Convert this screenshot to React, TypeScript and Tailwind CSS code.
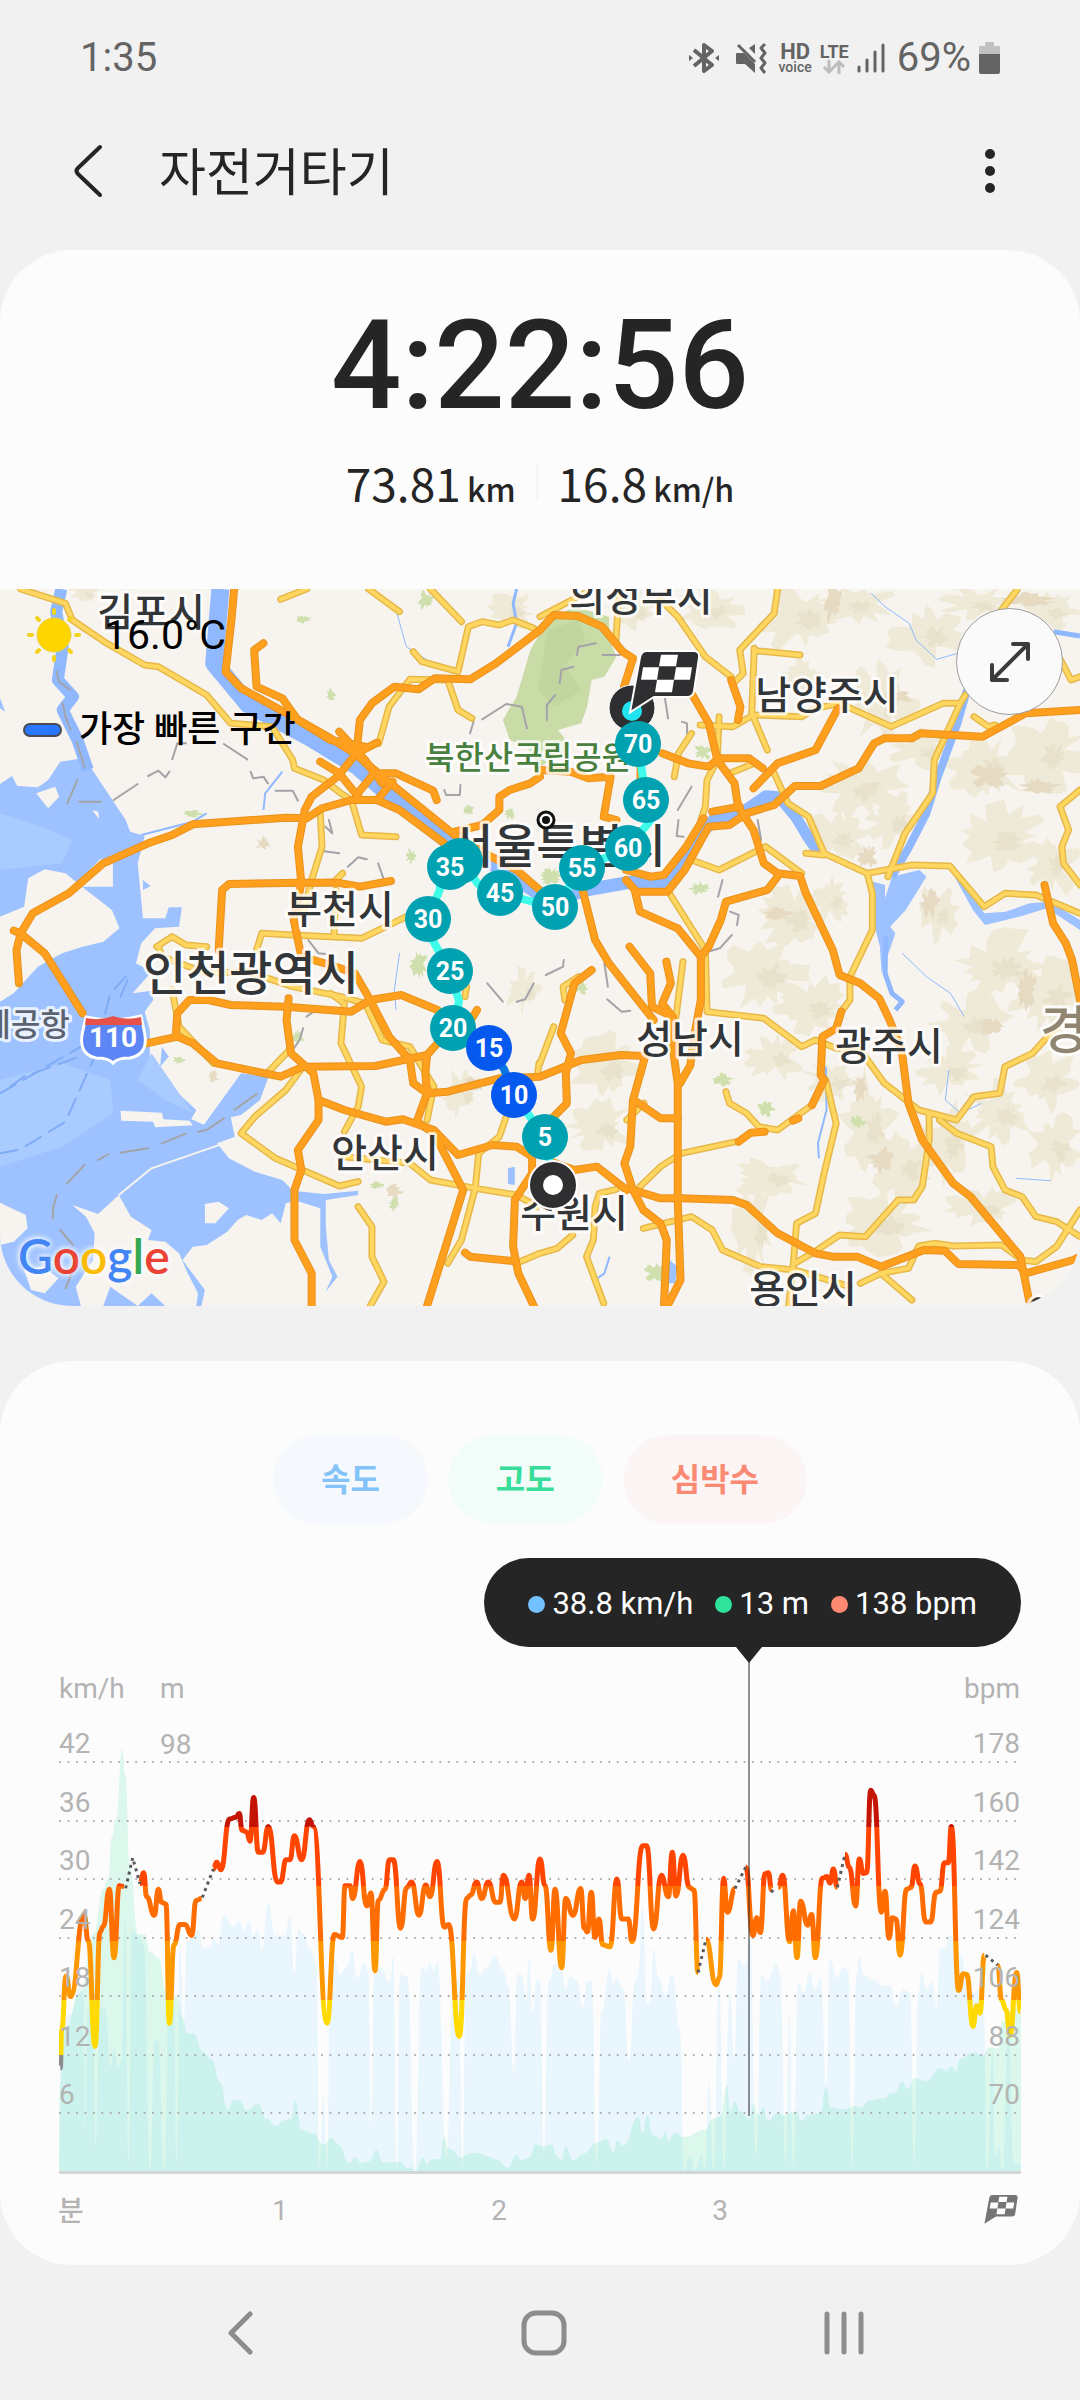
import React from "react";

// ---------- helpers ----------

type Point = [number, number];

type Chunk = {
  offset: number;
  points: string;
};

const parse = (points: string, offset = 0): Point[] =>
  points.split(" ").map((pair) => {
    const [x, y] = pair.split(",").map(Number);
    return [x + offset, y];
  });

const joinChunks = (chunks: Chunk[]): Point[] =>
  chunks.flatMap((chunk) => parse(chunk.points, chunk.offset));

// Curva suave con tangente horizontal en cada punto
const smooth = (points: Point[]) =>
  points.reduce((d, [x, y], i) => {
    if (i === 0) return `M${x} ${y}`;
    const [px, py] = points[i - 1];
    const mx = (px + x) / 2;
    return `${d}C${mx} ${py} ${mx} ${y} ${x} ${y}`;
  }, "");

const area = (chunks: Chunk[]) => `${smooth(joinChunks(chunks))}V1383H177Z`;

// Mancha irregular de terreno
const blob = (cx: number, cy: number, rx: number, ry: number, seed: number) => {
  const points: string[] = [];
  for (let i = 0; i < 30; i++) {
    const angle = (i / 30) * Math.PI * 2;
    const noise = Math.abs(Math.sin(seed * 127.1 + i * 311.7) * 43758.5) % 1;
    const k = 0.45 + 0.75 * noise;
    points.push(
      `${Math.round(cx + Math.cos(angle) * rx * k)},${Math.round(cy + Math.sin(angle) * ry * k)}`
    );
  }
  return points.join(" ");
};

// ---------- map data ----------

const waterAreas = [
  "0,612 35,588 50,618 110,622 140,600 175,545 240,535 262,560 365,720 378,755 420,768 400,850 415,1015 480,1015 490,982 528,982 520,1040 450,1045 410,1090 395,1150 440,1175 385,1240 440,1232 445,1260 420,1295 435,1350 435,1460 570,1590 555,1618 592,1634 700,1480 780,1490 755,1560 700,1605 670,1612 682,1670 630,1690 665,1735 740,1775 820,1800 850,1832 940,1842 1040,1832 1040,1845 946,1860 946,1940 955,2040 980,2090 945,2136 965,2090 930,2000 930,1885 860,1862 830,1870 815,1930 790,1900 760,1920 715,1905 690,1920 660,1955 600,1995 560,2000 530,2040 595,2130 585,2178 0,2178",
  "2518,900 2570,915 2570,955 2590,890 2670,870 2690,890 2630,990 2585,1040 2600,1060 2560,1180 2555,1100 2540,1040",
  "2758,865 2798,900 2858,1000 2920,995 2990,970 3050,965 3136,1020 3136,1050 3040,985 2960,1010 2860,1035 2825,990",
  "1938,2035 1968,2060 1960,2110 1938,2110",
  "470,1400 490,1430 465,1460",
  "1475,1765 1495,1760 1495,1815 1475,1812",
  "0,355 15,395 0,385",
  "415,900 438,918 415,930",
];

const deepWater = [
  "0,700 120,740 210,780 180,850 0,870",
  "0,1500 180,1450 320,1500 330,1600 180,1700 0,1760",
  "440,1420 560,1600 480,1560 400,1500",
];

const islands = [
  "0,1010 70,980 82,895 130,868 190,880 250,930 325,990 347,1045 300,1085 240,1100 180,1120 110,1160 40,1240 0,1265",
  "232,920 260,870 290,838 328,838 328,920",
  "105,640 160,620 172,650 140,685",
  "268,690 285,695 288,718",
  "350,1592 470,1598 475,1618 550,1622 560,1636 450,1642 445,1625 352,1622",
  "210,1875 285,1902 345,1845 380,1910 440,1950 430,1980 480,1985 520,2020 545,2080 575,2140 570,2178 480,2178 440,2140 400,2178 320,2120 300,2178 235,2178 220,2120 270,2040 275,1960 250,1910",
  "0,1868 75,1905 80,1945 40,1985 0,1995",
  "595,1872 635,1865 665,1885 625,1930 595,1930",
  "70,2070 125,2060 170,2095 130,2140 90,2130",
];

const rivers: { d: string; width: number }[] = [
  { d: "178,27 163,95 182,200 168,300 212,350 182,390 225,480 255,570", width: 12 },
  { d: "640,27 622,250 720,372 900,472 1040,560 1150,660 1300,780", width: 18 },
  { d: "1300,780 1440,860 1600,965 1700,930 1840,905 1930,905 1985,840 2025,765 2075,720 2155,700 2225,650 2275,655", width: 13 },
  { d: "2260,648 2310,710 2345,770 2375,815", width: 11 },
  { d: "2808,330 2780,430 2720,600 2690,700 2640,800 2590,890", width: 8 },
  { d: "2572,1070 2570,1180 2590,1240 2620,1265 2600,1290", width: 5 },
  { d: "2530,40 2570,80 2640,130 2660,180 2720,238 2780,220", width: 1 },
  { d: "3060,155 3136,168", width: 5 },
  { d: "1500,27 1490,70 1500,130 1475,200", width: 3 },
  { d: "1150,90 1180,200 1240,240", width: 1 },
  { d: "820,575 770,640 765,690", width: 2 },
  { d: "410,765 560,725 600,700", width: 2 },
  { d: "2398,1460 2400,1590 2375,1690 2378,1735", width: 2 },
  { d: "2620,1120 2690,1190 2760,1240 2800,1310", width: 1 },
  { d: "2755,1470 2745,1560 2790,1600 2850,1570", width: 1 },
  { d: "2950,1795 3050,1802", width: 1 },
  { d: "1770,2030 1755,2080 1730,2098", width: 2 },
  { d: "650,1690 440,1765 345,1845", width: 0 },
  { d: "1160,1120 1145,1230 1150,1290", width: 1 },
];

const terrain: [number, number, number, number, number][] = [
  [1840, 90, 60, 60, 1], [2060, 90, 100, 70, 2], [2330, 110, 120, 100, 3], [2480, 70, 120, 55, 4],
  [2700, 160, 120, 90, 5], [2840, 70, 110, 50, 6], [3050, 90, 90, 55, 7], [2560, 360, 110, 110, 8],
  [2330, 290, 60, 50, 9], [2500, 620, 120, 100, 10], [2680, 510, 90, 60, 11], [2430, 770, 90, 80, 12],
  [2590, 720, 80, 80, 13], [2860, 560, 110, 110, 14], [3040, 520, 110, 120, 15], [2900, 770, 130, 100, 16],
  [3050, 850, 80, 100, 17], [2300, 1010, 110, 100, 18], [2220, 1180, 130, 110, 19], [2410, 960, 60, 70, 20],
  [2360, 1280, 110, 90, 21], [2420, 1500, 90, 60, 22], [2250, 1430, 90, 70, 23], [2900, 1160, 150, 110, 24],
  [3050, 1240, 120, 120, 25], [2820, 1330, 120, 90, 26], [2760, 1470, 90, 70, 27], [2520, 1640, 80, 160, 28],
  [2630, 1760, 90, 100, 29], [2750, 1690, 80, 120, 30], [2240, 1790, 110, 60, 31], [2560, 1930, 130, 90, 32],
  [2900, 1600, 110, 90, 33], [3040, 1500, 100, 90, 34], [3060, 1700, 80, 110, 35], [1760, 1460, 100, 110, 36],
  [1740, 1640, 90, 80, 37], [2190, 1950, 60, 130, 38], [2850, 1880, 100, 60, 39], [1480, 90, 70, 60, 40],
  [1520, 1230, 50, 70, 41], [1340, 1540, 50, 70, 42], [2720, 1000, 60, 80, 43], [240, 35, 40, 30, 44],
];

const hills: [number, number, number, number, number][] = [
  [2420, 60, 25, 70, 3], [2600, 350, 50, 25, 5], [2990, 60, 80, 22, 9], [2870, 590, 50, 40, 12],
  [2260, 1000, 40, 25, 14], [2980, 1230, 30, 60, 16], [2880, 1340, 40, 25, 18], [2500, 1520, 25, 40, 22],
  [2520, 830, 30, 35, 23], [2700, 970, 30, 40, 26], [3020, 620, 60, 25, 28], [2560, 1740, 40, 40, 30],
  [1380, 1510, 35, 22, 31], [765, 790, 25, 18, 33], [1145, 1835, 22, 25, 36], [620, 1490, 15, 18, 37],
];

const parks: [number, number, number, number, number][] = [
  [880, 118, 22, 12, 1], [960, 345, 14, 20, 2], [1238, 60, 22, 28, 3], [1215, 1150, 26, 40, 4],
  [865, 1370, 18, 22, 5], [1195, 830, 16, 22, 6], [2225, 1585, 26, 24, 7], [2490, 1625, 26, 18, 8],
  [2100, 1500, 30, 20, 9], [2030, 925, 28, 20, 10], [1690, 1225, 22, 18, 11], [1905, 2080, 34, 30, 12],
  [1145, 1870, 16, 22, 13], [1095, 1815, 20, 14, 14], [560, 700, 26, 12, 15], [1360, 690, 18, 14, 16],
  [2040, 515, 26, 26, 17], [1600, 890, 36, 26, 18], [520, 1440, 18, 12, 19], [1480, 700, 16, 20, 20],
];

const highways = [
  "680,27 672,120 655,275 700,325 850,410 960,475 1030,520 1110,590 1320,765 1430,832 1500,870 1590,950",
  "765,190 738,210 745,320 820,355 865,420 960,480 1060,500",
  "1568,150 1440,250 1365,298 1262,295 1215,328 1145,320 1080,370 1045,420 1035,520 980,590 905,650 885,690 865,800 875,910 853,1020 875,1130 960,1155 1030,1180 1075,1260 1130,1370 1190,1440 1200,1510 1240,1540 1300,1535 1450,1495 1568,1490 1688,1440 1803,1425 1870,1428",
  "60,1060 95,1000 200,940 300,850 430,790 500,765 560,733 830,713 890,715 935,685 1020,660 1095,660 1160,690 1290,790",
  "985,455 1060,540 1110,610",
  "930,545 985,580 1040,650",
  "1095,488 1035,520 1090,580 1150,580 1258,632 1268,660",
  "1140,605 1095,660",
  "1090,575 1035,645",
  "635,1110 645,930 665,912 870,908 980,908 1045,920 1135,903",
  "1568,150 1608,105 1678,108 1748,140 1808,215 1838,235 1812,320",
  "1980,290 2058,430 2083,540 2133,610 2143,680 2188,750 2218,850 2258,880 2323,888 2340,940 2418,1110 2438,1185 2498,1210 2553,1255 2583,1320 2618,1410 2638,1570 2678,1680 2768,1810 2818,1850 2963,2030 2988,2160",
  "1923,520 1998,550 2058,560 2088,535 2175,535 2215,565",
  "2433,385 2368,510 2258,550 2188,625",
  "3136,390 2978,400 2853,470 2673,460 2648,475 2568,475 2538,490 2493,565 2383,618 2308,618 2248,675 2168,700 2118,735 2058,740 1988,870 1938,935 1848,935 1818,900",
  "2043,715 1993,800 1928,885 1888,890 1818,870",
  "2123,300 2150,380 2143,420",
  "3033,915 3058,1030 3095,1090 3113,1140 3136,1260",
  "2068,695 2148,680",
  "2258,890 2228,930 2108,965 2093,1020 2058,1100 2035,1130 2035,1260 2010,1400 2005,1455 1975,1510",
  "1693,935 1728,1080 1768,1150 1898,1320",
  "1843,930 1858,995 1968,1045 2035,1130",
  "1568,590 1540,610 1480,630 1450,650 1450,690 1400,735 1320,755",
  "1568,570 1658,575 1708,595 1773,590 1753,710 1790,720",
  "1860,560 1860,630",
  "40,1052 60,1060 130,1120 240,1300",
  "60,1060 48,1110 55,1210",
  "425,1390 515,1370 560,1390 630,1450 815,1490 880,1460 1090,1458 1240,1425",
  "510,1370 515,1300 550,1260 605,1260 670,1275 830,1280 1020,1295 1075,1260 1165,1245 1270,1290",
  "838,1255 832,1320 845,1420 910,1480 925,1560 925,1620 865,1710 875,1770 855,1830 855,1980 905,2080 905,2178",
  "925,1560 1000,1590 1120,1625 1170,1618 1260,1650 1330,1725 1430,1695 1500,1700 1545,1730 1545,1780 1495,1860 1490,2000 1505,2080 1550,2178",
  "1385,1290 1350,1350 1270,1390 1240,1425 1235,1480 1240,1540 1210,1625 1260,1660 1310,1760 1345,1830 1300,1980 1240,2178",
  "1350,2018 1365,2030 1490,2043",
  "1873,1430 1838,1560 1830,1700 1813,1750 1838,1830 1918,1855 1978,1855 2128,1860 2168,1875 2258,1960 2368,2020 2418,2030 2488,2030 2558,2060 2683,2010 2743,2012 2783,2052 2958,2055 2978,2080 3116,2040 3136,2030",
  "1600,1745 1668,1770 1733,1760 1820,1830",
  "1838,1830 1868,1890 1918,1930 1936,1980 1928,2178",
  "1953,1400 1968,1510 1968,1860 1976,2100 1938,2178",
  "1848,1565 1918,1615 1968,1615",
  "1718,1170 1668,1210 1628,1360 1658,1420 1643,1480 1646,1570 1608,1610",
  "1828,1100 1888,1180 1893,1280 1953,1310",
  "1935,1145 1948,1210 1923,1270 1953,1310 1960,1420",
  "2443,1295 2428,1345 2388,1370 2383,1485 2393,1500 2358,1575",
  "2145,1685 2180,1658 2220,1655",
  "2303,1622 2318,1615",
];

const roads = [
  "60,27 190,70 210,120 310,190 420,255 460,260 600,345 670,430 790,440 850,540 855,565 940,600 990,640 1020,660 1050,765 1150,770",
  "815,58 890,27",
  "1070,27 1160,95",
  "1250,27 1340,125",
  "1200,215 1225,245 1330,275 1360,140 1400,125 1450,135 1490,120 1550,145",
  "1100,490 1130,380 1190,298 1300,300 1330,390 1370,415",
  "930,700 935,800 905,900 880,1000",
  "455,1100 500,1070 540,1095 600,1100",
  "745,1110 760,1060 850,1065 1050,1075 1180,1010",
  "920,908 970,905 995,880",
  "975,930 970,1070",
  "500,1230 520,1340 620,1450",
  "960,1240 1000,1270 990,1390 1050,1520 1040,1580 1000,1655",
  "780,1475 840,1410",
  "880,1460 830,1530 740,1610 700,1660 800,1735 985,1818 1040,1805",
  "1040,1880 1080,1940 1080,2030 1115,2105 1075,2178",
  "1000,1730 1190,1750 1250,1800 1380,1825 1500,1845 1560,1880",
  "1300,2050 1340,1980 1380,1825 1390,1720 1450,1670 1470,1610",
  "460,1100 470,1130 600,1180 720,1175 850,1220 990,1250 1060,1270 1110,1380 1190,1400 1260,1520 1240,1620",
  "1560,1490 1565,1450",
  "1350,1250 1355,1220 1320,1180",
  "1568,110 1698,40",
  "1798,27 1788,190",
  "1918,60 1968,110 2048,230 2123,290",
  "2258,27 2248,100 2148,210 2158,280 2130,310",
  "2193,212 2323,225",
  "2190,205 2183,400 2228,510",
  "2033,435 2128,440 2188,405 2328,410 2368,385 2438,370 2588,440 2738,370 2788,370 2803,345",
  "2788,370 2713,540 2708,640 2628,760 2578,890",
  "2953,30 2908,90",
  "3080,240 3110,300 3136,290",
  "2828,410 2870,440 2890,435",
  "2248,580 2288,670 2348,710 2393,820 2518,880 2648,855 2758,858 2858,980 2918,940 3008,945 3136,1000",
  "2518,880 2533,940 2533,1050 2468,1190 2468,1260 2443,1295",
  "2340,820 2393,825",
  "2008,840 2088,870 2223,800 2328,880",
  "2008,460 1970,520 1958,590",
  "2088,410 2083,540 2053,600 2048,680 2035,720",
  "2120,580 2190,550",
  "1938,930 2048,1110",
  "3136,630 3078,680 3103,750 3083,800 3088,850 3136,915",
  "2048,1100 2053,1295 2218,1315 2328,1400 2368,1380 2428,1405 2498,1410 2568,1510 2668,1590 2778,1620 2828,1550 2903,1540 2918,1460 2998,1420 3068,1340",
  "2698,1600 2698,1680 2678,1820 2653,1860 2608,1860 2513,1970 2438,1965 2358,2020 2308,2050",
  "2728,1620 2778,1660 2878,1700 2883,1760 2918,1830 2968,1850 3008,1910 3068,1925 3136,1970",
  "3136,1890 3068,2000 3008,2045 2968,2040 2908,1995 2768,1998 2713,1990 2668,1998 2638,2065 2558,2080 2498,2110",
  "2398,1500 2428,1630 2393,1780 2368,1900 2313,1930 2303,2060 2290,2178",
  "2108,1535 2118,1570 2168,1600 2203,1640 2258,1650 2358,1575",
  "1978,1720 2138,1685",
  "1978,1720 1918,1760 1858,1820",
  "1868,1945 2008,1910 2068,1950 2098,2010 2208,2060 2308,2070 2468,2120",
  "2558,2080 2648,2160",
  "1983,1145 1963,1310",
  "1663,1965 1618,2005 1568,2020 1510,2045",
  "1790,1828 1740,1840 1728,1880 1723,1980 1703,2030 1753,2170",
  "1608,1340 1568,1450",
  "1640,1260 1635,1220 1680,1190",
  "1820,1620 1870,1570",
];

const rails = [
  "165,275 170,305 205,330", "182,370 190,410 205,450", "222,485 245,560", "225,600 195,670", "230,665 293,665",
  "330,660 400,612", "500,538 515,490 540,490", "650,492 718,538", "430,588 460,572 480,592 492,575",
  "728,575 735,595 765,590 778,610", "800,632 850,632 865,662", "1400,418 1470,372 1515,380 1530,445",
  "1290,630 1295,645 1335,645 1337,615", "955,720 965,760 945,740", "930,812 985,820", "1010,860 1040,832 1065,838",
  "1098,850 1115,900", "1365,460 1375,425", "745,1542 680,1590", "650,1615 600,1650 575,1655", "540,1660 470,1690",
  "430,1705 350,1718", "315,1722 285,1740", "245,1755 195,1810", "165,1845 155,1880 153,1915", "175,1950 212,1995",
  "208,2080 190,2125", "880,1345 870,1380 850,1410", "890,1310 930,1280", "895,1080 925,1120 945,1122",
  "1415,1210 1460,1265", "1500,1265 1525,1258 1550,1210", "1675,225 1680,200 1730,190", "1625,310 1630,270 1665,260",
  "1588,420 1588,375 1612,345", "1750,225 1800,225", "1930,350 1940,415", "1968,690 2008,620", "1970,720 1965,768 1985,770",
  "2098,900 2085,950", "2120,995 2145,1005 2140,1035", "2125,1065 2090,1105 2040,1120", "1585,1185 1635,1160 1637,1140",
  "1755,1150 1765,1220", "1763,1258 1805,1295 1830,1292", "1980,425 1995,430 1995,460", "2200,720 2210,780",
];

const ferries = ["0,1540 235,1400", "30,1520 70,1490 230,1430", "0,1720 60,1708 190,1625 240,1510 275,1430 320,1240 365,1190", "350,1250 375,1190"];

const cityLabels = [
  { text: "김포시", x: 151, y: 37 },
  { text: "의정부시", x: 641, y: 22 },
  { text: "남양주시", x: 827, y: 120 },
  { text: "부천시", x: 340, y: 334 },
  { text: "안산시", x: 385, y: 578 },
  { text: "성남시", x: 690, y: 464 },
  { text: "광주시", x: 889, y: 471 },
  { text: "수원시", x: 574, y: 638 },
  { text: "용인시", x: 803, y: 714 },
];

const kmMarkers = [
  { km: 35, x: 450, y: 278 },
  { km: 30, x: 428, y: 330 },
  { km: 45, x: 500, y: 304 },
  { km: 50, x: 555, y: 318 },
  { km: 55, x: 582, y: 279 },
  { km: 60, x: 628, y: 259 },
  { km: 65, x: 646, y: 211 },
  { km: 70, x: 638, y: 155 },
  { km: 25, x: 450, y: 382 },
  { km: 20, x: 453, y: 439 },
  { km: 15, x: 489, y: 459, fast: true },
  { km: 10, x: 514, y: 506, fast: true },
  { km: 5, x: 545, y: 548 },
];

// ---------- chart data ----------

const speed: Chunk[] = [
  { offset: 120, points: "57,1383 62,1000 75,962 90,960 120,880 130,900 135,1270 142,950 150,930 160,1000 167,1310 180,940 195,940 212,1100 222,1050 235,1100 245,1080 255,700 266,1360 275,730 300,750 312,770 330,1383 345,1030 355,1030 372,1383 390,850 400,870 410,1360 420,760 432,1000 440,760 475,730 490,780 512,775 520,755 535,770 550,690 580,720 600,705 612,730 625,708 640,745 655,730 665,785 685,655 705,745 735,745 750,690 763,850 775,730 790,740 810,780 830,830 838,1375 850,1180 862,1370 870,830 885,810 900,850 920,830 937,785 950,860 975,820 985,840 993,1255 1003,850 1020,830" },
  { offset: 1140, points: "30,870 39,800 51,1380 60,850 82,855 105,1380 125,830 140,838 150,820 160,840 172,820 200,1350 218,900 235,860 248,1380 258,850 270,840 282,795 300,850 320,830 345,800 370,840 385,880 402,1115 412,850 425,850 438,920 447,810 458,955 470,865 480,870 492,1340 505,870 525,820 545,840 557,890 570,855 590,865 610,940 622,870 635,870 650,1360 665,950 690,835 700,880 710,860 730,890 747,1085 765,870 775,850 787,665 802,930 812,920 820,780 835,855 855,905 877,850 900,1000 912,1380 930,1340 945,1380 965,1340 975,1380 987,1140 1000,1380 1018,860 1031,1380" },
  { offset: 2100, points: "90,900 103,1080 115,810 135,830 150,750 168,1340 185,850 200,870 230,820 240,850 258,1360 268,960 280,1365 295,870 310,900 330,845 345,890 362,860 379,1150 390,810 412,860 430,830 445,840 457,1370 470,850 478,800 490,850 520,865 550,880 570,880 588,935 610,890 630,900 643,1365 655,900 665,845 680,890 695,870 710,940 720,780 735,780 750,745 765,760 785,800 800,870 820,900 840,890 850,900 862,1383 878,1060 885,1340 897,1320 908,1383 925,1000 942,1360 963,1363" },
];

const altitude: Chunk[] = [
  { offset: 120, points: "57,1383 60,1150 75,1000 120,900 160,740 190,620 205,590 215,480 228,430 247,240 256,310 270,560 295,740 315,742 330,790 355,805 380,900 410,910 430,970 440,1010 460,1010 490,1060 515,1080 540,1140 563,1215 580,1190 600,1190 620,1218 655,1200 680,1240 710,1260 730,1245 755,1240 765,1190 785,1270 820,1280 850,1310 875,1292 895,1310 928,1360 945,1345 965,1360 990,1355 1008,1325 1030,1360" },
  { offset: 1140, points: "30,1358 60,1358 85,1375 95,1370 105,1383 130,1345 140,1362 155,1350 180,1350 193,1290 205,1320 215,1325 240,1345 270,1335 295,1333 315,1340 350,1350 382,1372 410,1338 425,1352 450,1345 465,1310 490,1315 515,1310 530,1340 545,1352 557,1315 580,1352 610,1335 650,1305 680,1295 700,1330 712,1300 730,1313 775,1235 788,1280 802,1230 820,1285 845,1295 855,1275 865,1300 885,1278 910,1290 975,1270 1000,1240 1020,1235 1042,1150" },
  { offset: 2100, points: "90,1220 105,1195 120,1220 148,1240 160,1200 175,1230 190,1210 203,1245 235,1225 250,1230 290,1220 303,1245 325,1230 360,1225 379,1155 392,1210 430,1215 465,1205 480,1210 510,1190 555,1185 570,1172 585,1170 605,1140 625,1160 643,1130 680,1138 720,1103 740,1112 753,1098 768,1110 780,1078 820,1062 850,1068 865,1047 895,1050 905,980 940,950 963,930" },
];

const heartRate: Chunk[][] = [
  [{ offset: 120, points: "61,1103 65,1000 78,855 92,910 132,690 145,760 165,1045 180,735 190,720 208,620 222,805 238,610 252,612" }],
  [{ offset: 120, points: "300,605 311,575 320,640 343,690 355,620 365,655 378,660 388,982 402,770 420,715 435,715 455,745 468,650 485,645" }],
  [
    { offset: 120, points: "520,565 530,547 543,567 568,430 588,425 598,415 606,460 620,465 630,490 641,372 655,520 668,520 685,450 712,600 722,600 738,540 750,540 763,475 785,540 808,432 820,450 861,982 883,742 907,750 915,610 930,610 938,645 960,545 980,665 993,630 1005,840 1015,650 1035,620" },
    { offset: 1140, points: "28,540 40,540 62,725 80,615 95,600 117,690 137,608 150,640 171,545 193,722 206,715 238,1018 260,645 272,635 290,600 305,645 325,600 347,655 360,655 370,582 403,700 425,600 436,645 447,582 458,700 480,538 495,610 513,785 525,620 545,832 557,645 579,690 602,618 613,725 622,735 634,628 645,750 657,700 668,770 690,775 711,592 725,700 745,700 756,762 788,502 800,502 821,727 844,582 865,640 877,520 888,638 909,528 928,615 942,622 954,845" },
  ],
  [{ offset: 1140, points: "978,755 1008,878 1018,860 1031,590 1042,682 1065,618" }],
  [{ offset: 2100, points: "137,560 159,745 170,697 181,737 195,578 205,575 215,622" }],
  [{ offset: 2100, points: "235,615 248,582 269,762 280,678 291,805 302,652 323,717 335,688 346,805 367,590 380,585 390,603 400,565 412,615" }],
  [{ offset: 2100, points: "435,525 448,560 467,665 478,538 490,577 500,575 512,352 522,365 544,682 555,625 567,752 577,697 588,700 600,798 620,620 633,615 645,557 660,605 677,708 692,708 708,628 720,625 733,548 745,548 754,450 776,893 790,848 800,850 819,990 830,935 840,955 853,798" }],
  [{ offset: 2100, points: "893,825 905,920 918,945 930,1015 950,845 961,950" }],
];

const heartGaps: Chunk[] = [
  { offset: 120, points: "257,617 278,535 300,605" },
  { offset: 120, points: "487,642 520,565" },
  { offset: 1140, points: "954,845 978,755" },
  { offset: 2100, points: "105,618 137,560" },
  { offset: 2100, points: "213,622 224,630" },
  { offset: 2100, points: "412,615 435,525" },
  { offset: 2100, points: "857,798 893,825" },
];

const zones = [
  { from: 0, to: 451, color: "#c41404" },
  { from: 451, to: 610, color: "#ff4500" },
  { from: 610, to: 760, color: "#ff6d00" },
  { from: 760, to: 918, color: "#ff9800" },
  { from: 918, to: 1068, color: "#ffd900" },
  { from: 1068, to: 1400, color: "#8c8c8c" },
];

const gridRows = [
  { line: 102, speed: "42", bpm: "178" },
  { line: 161, speed: "36", bpm: "160" },
  { line: 219, speed: "30", bpm: "142" },
  { line: 278, speed: "24", bpm: "124" },
  { line: 336, speed: "18", bpm: "106" },
  { line: 395, speed: "12", bpm: "88" },
  { line: 453, speed: "6", bpm: "70" },
];

const readings = [
  { dot: "bg-[#74c1ff]", text: "38.8 km/h" },
  { dot: "bg-[#2fe39b]", text: "13 m" },
  { dot: "bg-[#ff8870]", text: "138 bpm" },
];

// ---------- components ----------

const StatusBar = () => (
  <div className="flex h-28 items-center justify-between px-20 pt-1 text-[40px] text-[#646464]">
    <span>1:35</span>
    <div className="flex items-center gap-2">
      <svg className="mr-2 h-8 w-[30px]" viewBox="0 0 30 32" fill="none" stroke="currentColor" strokeWidth="4">
        <path d="M5 8 23 23 15 29V3L23 9 5 24" strokeLinejoin="round" />
        <path d="M0 13v6l4-3zM30 13v6l-4-3z" fill="currentColor" stroke="none" />
      </svg>
      <svg className="mr-1 h-8 w-[32px]" viewBox="0 0 32 32" fill="currentColor">
        <path d="M1 12q0-1 1-1h7L20 22v9L10 22H2q-1 0-1-1zM20 2v10l-6-6z" />
        <path d="M3 3l17 17" stroke="currentColor" strokeWidth="3" />
        <path d="M30 2l-4 4 4 5-4 5 4 5-4 5 4 5" fill="none" stroke="currentColor" strokeWidth="3" strokeLinejoin="round" />
      </svg>
      <span className="flex flex-col items-center text-[22px] leading-[18px] font-bold">
        HD
        <span className="text-sm leading-3 font-medium">voice</span>
      </span>
      <span className="flex flex-col items-center text-[18px] leading-[17px] font-bold">
        LTE
        <svg className="h-[14px] w-[24px]" viewBox="0 0 24 14" fill="none" stroke="#bdbdbd" strokeWidth="3">
          <path d="M7 0v11M2 7l5 5 5-5M17 14V3M12 7l5-5 5 5" />
        </svg>
      </span>
      <svg className="mr-1 h-[30px] w-[28px]" viewBox="0 0 28 30" stroke="currentColor" strokeWidth="3" strokeLinecap="round">
        <path d="M2 24v4M10 17v11M18 9v19M26 2v26" />
      </svg>
      <span>69%</span>
      <svg className="h-8 w-[21px]" viewBox="0 0 21 32">
        <path d="M6 5V1q0-1 1-1h7q1 0 1 1v3h5q1 0 1 1v8H0V5q0-1 1-1h5z" fill="#c1c1c1" />
        <path d="M0 12h21v18q0 2-2 2H2q-2 0-2-2z" fill="currentColor" />
      </svg>
    </div>
  </div>
);

const TitleBar = () => (
  <header className="mb-5 flex h-[118px] items-center pr-[78px] pl-[70px] text-[#252525]">
    <button type="button" aria-label="뒤로" className="mr-[53px]">
      <svg className="h-[54px] w-9" viewBox="0 0 36 54" fill="none" stroke="currentColor" strokeWidth="4" strokeLinecap="round" strokeLinejoin="round">
        <path d="M30 3 8 24q-3 3 0 6l22 21" />
      </svg>
    </button>
    <h1 className="flex-1 pt-1 text-[51px] leading-none">자전거타기</h1>
    <button type="button" aria-label="더보기">
      <svg className="h-12 w-6" viewBox="0 0 24 48" fill="currentColor">
        <circle cx="12" cy="7" r="5" />
        <circle cx="12" cy="24" r="5" />
        <circle cx="12" cy="41" r="5" />
      </svg>
    </button>
  </header>
);

const FlagShape = ({ color }: { color: string }) => (
  <g>
    <path d="M20 2h46q7 0 6 7l-5 35q-1 6-7 6H27L3 66 13 9q1-7 7-7z" fill={color} />
    <g fill="#fff" stroke="none">
      <path d="M34 6h17l-2 12H32zM16 19h16l-2 13H14zM49 19h16l-2 13H47zM30 32h17l-2 13H28z" />
    </g>
  </g>
);

const RideMap = () => (
  <div className="relative overflow-hidden rounded-b-[72px]">
    <svg className="block w-full" viewBox="0 0 1080 717" fontFamily='Roboto, "Noto Sans CJK KR", sans-serif'>
      <svg width="1080" height="717" viewBox="0 27 3136 2151" preserveAspectRatio="none" fill="none" strokeLinejoin="round" strokeLinecap="round">
        <rect y="27" width="3136" height="2151" fill="#f7f4ef" />
        {terrain.map(([cx, cy, rx, ry, seed]) => (
          <polygon key={seed} points={blob(cx, cy, rx, ry, seed)} fill="#eeead7" />
        ))}
        {terrain.map(([cx, cy, rx, ry, seed]) => (
          <polygon key={seed} points={blob(cx + 20, cy + 10, rx / 3, ry / 3, seed + 50)} fill="#e8e2cd" />
        ))}
        {hills.map(([cx, cy, rx, ry, seed]) => (
          <polygon key={seed} points={blob(cx, cy, rx, ry, seed)} fill="#e6dac2" />
        ))}
        {parks.map(([cx, cy, rx, ry, seed]) => (
          <polygon key={seed} points={blob(cx, cy, rx, ry, seed)} fill="#cfe0ae" />
        ))}
        <path d="M1540 210 1590 120 1668 80 1768 110 1770 180 1790 230 1755 290 1718 300 1705 380 1688 430 1620 450 1660 500 1568 560 1530 500 1480 480 1460 420 1500 350Z" fill="#c9dca7" />
        <path d="M1590 150 1680 120 1700 180 1640 260 1690 330 1610 380 1560 330Z" fill="#c1d69e" />
        {waterAreas.map((points) => (
          <polygon key={points} points={points} fill="#9dc2ff" />
        ))}
        {deepWater.map((points) => (
          <polygon key={points} points={points} fill="#a9cbff" />
        ))}
        {islands.map((points) => (
          <polygon key={points} points={points} fill="#f7f4ef" />
        ))}
        {rivers.map(({ d, width }) => (
          <polyline
            key={d}
            points={d}
            stroke={width ? "#8fb8ff" : "#f7f4ef"}
            strokeWidth={width || 2}
            strokeLinecap="butt"
            vectorEffect="non-scaling-stroke"
          />
        ))}
        {ferries.map((points) => (
          <polyline key={points} points={points} stroke="#7fabf5" strokeWidth="2" strokeDasharray="18 9" vectorEffect="non-scaling-stroke" />
        ))}
        {rails.map((points) => (
          <polyline key={points} points={points} stroke="#a3a3a8" strokeWidth="2" vectorEffect="non-scaling-stroke" />
        ))}
        {roads.map((points) => (
          <polyline key={points} points={points} stroke="#e6b84a" strokeWidth="7" vectorEffect="non-scaling-stroke" />
        ))}
        {roads.map((points) => (
          <polyline key={points} points={points} stroke="#ffd760" strokeWidth="4" vectorEffect="non-scaling-stroke" />
        ))}
        {highways.map((points) => (
          <polyline key={points} points={points} stroke="#ea921c" strokeWidth="8" vectorEffect="non-scaling-stroke" />
        ))}
        {highways.map((points) => (
          <polyline key={points} points={points} stroke="#fe9f1e" strokeWidth="6" vectorEffect="non-scaling-stroke" />
        ))}
      </svg>

      <g textAnchor="middle" stroke="#fff" strokeOpacity="0.8" strokeWidth="6" strokeLinejoin="round" paintOrder="stroke" fill="#333638">
        {cityLabels.map(({ text, x, y }) => (
          <text key={text} x={x} y={y} fontSize="39" fontWeight="500">
            {text}
          </text>
        ))}
        <text x="251" y="401" fontSize="47" fontWeight="500">인천광역시</text>
        <text x="558" y="274" fontSize="47" fontWeight="500">서울특별시</text>
        <text x="528" y="180" fontSize="32" fontWeight="500" fill="#48813f">북한산국립공원</text>
        <text x="1064" y="460" fontSize="52" fontWeight="500" fill="#908570">경</text>
        <text x="11" y="447" fontSize="32" fontWeight="500" fill="#5b6270">국제공항</text>
        <text x="1044" y="738" fontSize="39">이</text>
      </g>

      <path d="M86 428q27 6 55-1l3 14q6 24-14 28-13 0-17 5-4-5-17-5-19-4-13-28z" fill="#5c86f5" stroke="#fff" strokeWidth="3" />
      <path d="M86 429q14 3 27-2 14 5 28 1l1 8H85z" fill="#e8514a" />
      <text x="113" y="458" fontSize="28" fontWeight="700" fill="#fff" textAnchor="middle">110</text>

      <circle cx="546" cy="231" r="8" fill="#fff" stroke="#111" strokeWidth="3" />
      <circle cx="546" cy="231" r="4" fill="#111" />

      <g fill="none" strokeWidth="8" strokeLinejoin="round">
        <path d="M553 590 545 548 514 506M489 459 453 439 459 412 450 382 432 350 428 330 440 300 438 272 460 270 478 295 500 304 530 312 555 318 582 279 628 259 650 232 646 211 641 175 638 155 632 120" stroke="#3ffbea" />
        <path d="M514 506 504 480 489 459" stroke="#0a76e0" />
      </g>
      <circle cx="632" cy="119" r="23" fill="#2f2f31" stroke="#fff" strokeWidth="1" />
      <circle cx="632" cy="122" r="10" fill="#1fe3f0" />
      <g transform="translate(627 60) scale(1 0.960)" stroke="#fff" strokeWidth="2">
        <FlagShape color="#2f2f31" />
      </g>
      <circle cx="553" cy="596" r="24" fill="#2f2f31" stroke="#fff" strokeWidth="2" />
      <circle cx="553" cy="596" r="10" fill="#fff" />
      <circle cx="460" cy="272" r="23" fill="#00a1b1" />
      {kmMarkers.map(({ km, x, y, fast }) => (
        <g key={km}>
          <circle cx={x} cy={y} r="23" fill={fast ? "#0559ef" : "#00a1b1"} />
          <text x={x} y={y + 9} fontSize="25" fontWeight="700" fill="#fff" textAnchor="middle">
            {km}
          </text>
        </g>
      ))}
    </svg>

    <div className="absolute top-4 left-6 flex items-center gap-5 text-[41px] leading-[60px] text-black">
      <svg className="h-[60px] w-[60px]" viewBox="0 0 60 60" stroke="#f2d21d" strokeWidth="4" strokeLinecap="round">
        <circle cx="30" cy="30" r="17" fill="#ffd500" stroke="#e6cf4a" strokeWidth="1" />
        <path d="M30 5v3M30 52v3M5 30h3M52 30h3M13 13l2 2M45 45l2 2M13 47l2-2M45 15l2-2" />
      </svg>
      <span>16.0°C</span>
    </div>
    <div className="absolute top-[115px] left-[23px] flex items-center gap-[17px] text-4xl leading-[52px] font-medium text-black">
      <span className="h-[14px] w-[39px] rounded-full border-2 border-[#4a4a52] bg-[#2878ff]" />
      가장 빠른 구간
    </div>
    <button
      type="button"
      aria-label="지도 확대"
      className="absolute top-[19px] right-[17px] flex h-[107px] w-[107px] items-center justify-center rounded-full border border-[#9b9b9b] bg-[#fafafa] text-[#3c3c3c]"
    >
      <svg className="h-[42px] w-[42px]" viewBox="0 0 42 42" fill="none" stroke="currentColor" strokeWidth="4" strokeLinecap="round" strokeLinejoin="round">
        <path d="M3 39 39 3M24 3h15v15M3 24v15h15" />
      </svg>
    </button>
    <div className="absolute bottom-5 left-[18px] font-[Lato] text-5xl leading-[60px] font-semibold [text-shadow:0_0_6px_#fff,0_0_6px_#fff]">
      <span className="text-[#4285f4]">G</span>
      <span className="text-[#ea4335]">o</span>
      <span className="text-[#fbbc05]">o</span>
      <span className="text-[#4285f4]">g</span>
      <span className="text-[#34a853]">l</span>
      <span className="text-[#ea4335]">e</span>
    </div>
  </div>
);

const SummaryCard = () => (
  <section className="rounded-[72px] bg-[#fcfcfc] text-[#252525]">
    <div className="flex flex-col items-center pt-14 pb-[69px]">
      <p className="text-[124px] leading-[120px] font-medium">4:22:56</p>
      <div className="mt-[19px] flex h-[75px] items-center font-['Noto_Sans_CJK_KR']">
        <p className="text-[46px]">
          73.81 <span className="-ml-1 text-[32px] font-medium">km</span>
        </p>
        <span className="mx-5 h-9 w-[2px] bg-[#f5f5f5]" />
        <p className="text-[46px]">
          16.8 <span className="-ml-1 text-[32px] font-medium">km/h</span>
        </p>
      </div>
    </div>
    <RideMap />
  </section>
);

const Chart = () => (
  <svg className="block w-full overflow-visible" viewBox="0 0 962 576" fontFamily='Roboto, "Noto Sans CJK KR", sans-serif'>
    <defs>
      <linearGradient id="zones" gradientUnits="userSpaceOnUse" x1="0" y1="0" x2="0" y2="1400">
        {zones.flatMap(({ from, to, color }) => [
          <stop key={`${from}a`} offset={from / 1400} stopColor={color} />,
          <stop key={`${from}b`} offset={to / 1400} stopColor={color} />,
        ])}
      </linearGradient>
      <clipPath id="plot">
        <rect width="962" height="514" />
      </clipPath>
    </defs>
    <g clipPath="url(#plot)">
      <g transform="scale(0.33333 0.36990) translate(-177 0)">
        <path d={area(speed)} fill="#e9f6fd" />
        <path d={area(altitude)} fill="#37e39b" fillOpacity="0.16" />
      </g>
    </g>
    <g stroke="#a6a6a6" strokeWidth="2" strokeLinecap="round">
      {gridRows.map(({ line }) => (
        <line key={line} x1="1" x2="961" y1={line} y2={line} strokeDasharray="0.100 8.350" />
      ))}
    </g>
    <rect y="511" width="962" height="3" fill="#d2d6d5" />
    <g clipPath="url(#plot)">
      <g transform="scale(0.33333 0.36990) translate(-177 0)" fill="none">
        {heartRate.map((chunks, i) => (
          <path
            key={i}
            d={smooth(joinChunks(chunks))}
            stroke="url(#zones)"
            strokeWidth="5"
            strokeLinejoin="round"
            vectorEffect="non-scaling-stroke"
          />
        ))}
        {heartGaps.map(({ points, offset }) => (
          <polyline
            key={points}
            points={parse(points, offset).join(" ")}
            stroke="#5a5a5a"
            strokeWidth="3"
            strokeDasharray="3 4"
            vectorEffect="non-scaling-stroke"
          />
        ))}
      </g>
    </g>
    <g fill="#b3b3b3" fontSize="28">
      <text x="0" y="38">km/h</text>
      <text x="101" y="38">m</text>
      <text x="961" y="38" textAnchor="end">bpm</text>
      <text x="101" y="94">98</text>
      {gridRows.map(({ line, speed: label, bpm }) => (
        <React.Fragment key={line}>
          <text x="0" y={line - 9}>{label}</text>
          <text x="961" y={line - 9} textAnchor="end">{bpm}</text>
        </React.Fragment>
      ))}
      <text x="-1" y="561" fontWeight="500">분</text>
      <text x="221" y="560" textAnchor="middle">1</text>
      <text x="440" y="560" textAnchor="middle">2</text>
      <text x="661" y="560" textAnchor="middle">3</text>
    </g>
    <g transform="translate(924 534) scale(0.480 0.450)">
      <FlagShape color="#757575" />
    </g>
    <line x1="690" x2="690" y1="0" y2="456" stroke="#252525" strokeWidth="1" />
    <path d="M677-13h26L690 3z" fill="#252525" />
  </svg>
);

const ChartCard = () => (
  <section className="mt-[55px] rounded-[72px] bg-[#fcfcfc] px-[59px] pt-[74px] pb-[29px]">
    <div className="flex justify-center gap-5 text-[32px] font-bold">
      <button type="button" className="h-[89px] rounded-full bg-[#f5f9fd] px-12 text-[#83c3f9]">
        속도
      </button>
      <button type="button" className="h-[89px] rounded-full bg-[#f2fcf8] px-12 text-[#38dd99]">
        고도
      </button>
      <button type="button" className="h-[89px] rounded-full bg-[#fcf5f5] px-12 text-[#fa8a73]">
        심박수
      </button>
    </div>
    <div className="mt-[34px] mb-[13px] flex justify-end">
      <div className="flex h-[89px] items-center gap-[22px] rounded-full bg-[#252525] px-11 pt-1 text-[31px] text-white">
        {readings.map(({ dot, text }) => (
          <span key={text} className="flex items-center gap-[7px]">
            <span className={`h-[17px] w-[17px] rounded-full ${dot}`} />
            {text}
          </span>
        ))}
      </div>
    </div>
    <Chart />
  </section>
);

const NavBar = () => (
  <nav className="flex h-[135px] items-center justify-between px-[216px] text-[#8c8c8c]">
    <button type="button" aria-label="이전">
      <svg className="h-11 w-12" viewBox="0 0 48 44" fill="none" stroke="currentColor" strokeWidth="5" strokeLinecap="round" strokeLinejoin="round">
        <path d="M34 3 15 22l19 19" />
      </svg>
    </button>
    <button type="button" aria-label="홈">
      <svg className="h-[46px] w-[46px]" viewBox="0 0 46 46" fill="none" stroke="currentColor" strokeWidth="5">
        <rect x="3" y="3" width="40" height="40" rx="12" />
      </svg>
    </button>
    <button type="button" aria-label="최근 앱">
      <svg className="h-11 w-10" viewBox="0 0 40 44" stroke="currentColor" strokeWidth="5" strokeLinecap="round">
        <path d="M3 3v38M20 3v38M37 3v38" />
      </svg>
    </button>
  </nav>
);

export default function App() {
  return (
    <main className="min-h-screen bg-[#f1f1f1] font-[Roboto,'Noto_Sans_CJK_KR',sans-serif]">
      <StatusBar />
      <TitleBar />
      <SummaryCard />
      <ChartCard />
      <NavBar />
    </main>
  );
}
